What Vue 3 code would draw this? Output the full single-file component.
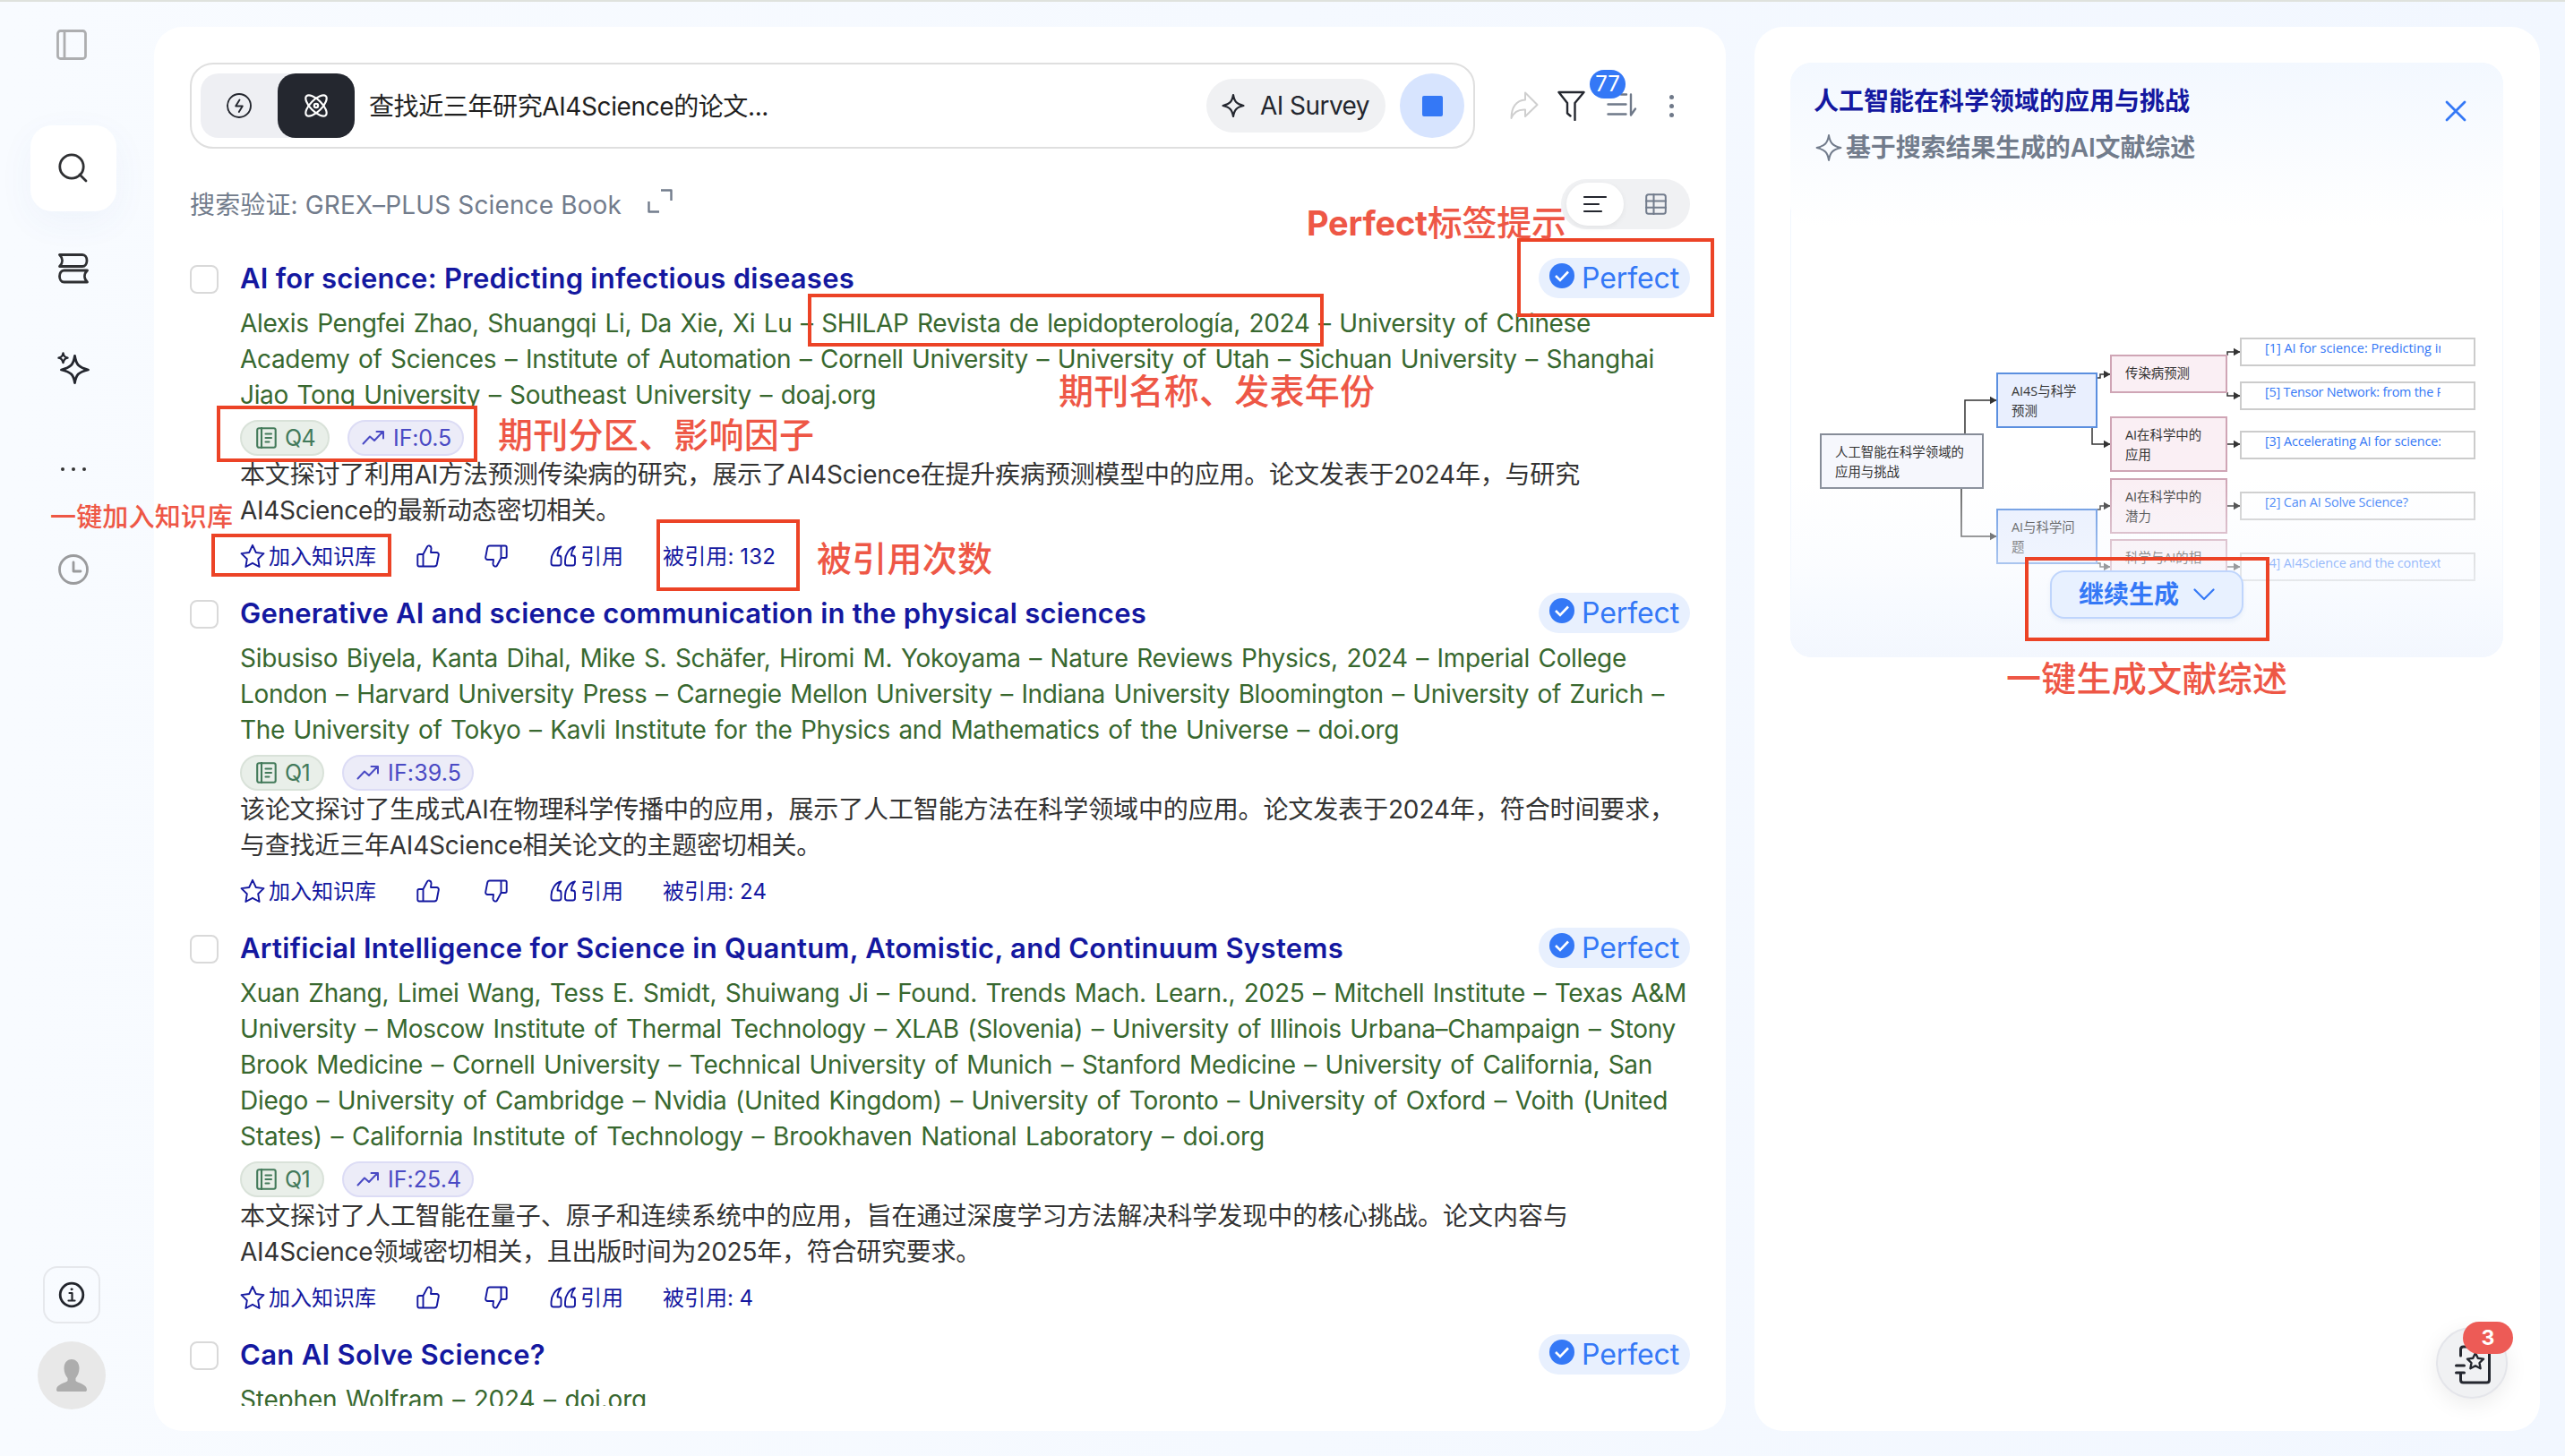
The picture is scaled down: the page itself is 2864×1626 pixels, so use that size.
<template>
  <div class="page">
    <aside class="sidebar">
      <svg class="ic nav-panel" viewBox="0 0 34 34">
        <rect x="1.5" y="1.5" width="31" height="31" rx="3" />
        <path d="M9 2v30" />
      </svg>
      <div class="nav-search">
        <svg class="ic" width="34" height="34" viewBox="0 0 34 34">
          <circle cx="15" cy="15" r="13.2" />
          <path d="M24 24l7 7" />
        </svg>
      </div>
      <svg class="ic nav-books" viewBox="0 0 34 34">
        <path d="M1.5 1.5H27c3 0 5 3 5 6.500s-2 6.500-5 6.500H1.500c4-4 4-9 0-13z" />
        <path d="M32.500 19H6.500c-3 0-5 3-5 6.500s2 6.500 5 6.500h26c-4-4-4-9 0-13z" />
      </svg>
      <svg class="ic nav-spark" viewBox="0 0 36 36">
        <path d="M19.500 4.500c1.500 9.500 4 12.500 15 15.500-11 2.500-13.500 5.500-15 14.500-1.500-9-4-12-15-14.500 11-3 13.500-6 15-15.500z" />
        <path d="M6.500 1.500c.8 3.500 1.700 4.400 5 5.200-3.300.8-4.200 1.800-5 5.300-.8-3.500-1.700-4.500-5-5.300 3.300-.8 4.200-1.700 5-5.200z" stroke-width="2.400" />
      </svg>
      <div class="nav-dots"><i></i><i></i><i></i></div>
      <svg class="ic nav-clock" viewBox="0 0 34 34">
        <circle cx="17" cy="17" r="15.500" />
        <path d="M17 9v10h8" />
      </svg>
      <div class="nav-info">
        <svg class="ic" width="30" height="30" viewBox="0 0 30 30">
          <circle cx="15" cy="15" r="12.800" />
          <path d="M12.500 13h3v8M11.500 21.500h7" stroke-width="2.200" />
          <circle cx="15" cy="8.800" r="1" fill="currentColor" stroke-width="1" />
        </svg>
      </div>
      <div class="avatar">
        <svg width="36" height="38" viewBox="0 0 36 38">
          <path
            fill="#adadad"
            d="M18 1c5 0 8.500 4 8.500 10 0 4.500-1.700 8.500-4 11v3c2 2.500 12.500 3.500 12.500 10 0 1.500-1 2-2 2H3c-1 0-2-.5-2-2 0-6.500 10.500-7.500 12.500-10v-3c-2.300-2.500-4-6.500-4-11C9.500 5 13 1 18 1z"
          />
        </svg>
      </div>
    </aside>

    <main class="panel results">
      <header class="topbar">
        <div class="searchbox">
          <div class="modes">
            <div class="mode">
              <svg class="ic" width="30" height="30" viewBox="0 0 30 30" stroke-width="1.900">
                <circle cx="15" cy="15" r="13" />
                <path d="M15.500 8.500l-4.300 7h7.600l-4 6.500" />
              </svg>
            </div>
            <div class="mode active">
              <svg class="ic" width="28" height="28" viewBox="0 0 28 28" stroke-width="2.200">
                <ellipse cx="14" cy="14" rx="15.200" ry="6.400" transform="rotate(45 14 14)" />
                <ellipse cx="14" cy="14" rx="15.200" ry="6.400" transform="rotate(-45 14 14)" />
                <circle cx="14" cy="14" r="2.200" />
              </svg>
            </div>
          </div>
          <span class="query"><span v-fit="446">查找近三年研究AI4Science的论文...</span></span>
          <div class="survey">
            <svg class="ic" width="28" height="28" viewBox="0 0 28 28" stroke-width="2.200">
              <path d="M14 2c1.300 7.500 3.500 10 11.500 12-8 2-10.200 4.500-11.500 12-1.300-7.500-3.500-10-11.500-12 8-2 10.200-4.500 11.500-12z" />
            </svg>
            <span v-fit="122">AI Survey</span>
          </div>
          <div class="stop"><i></i></div>
        </div>
        <svg class="ic share" viewBox="0 0 32 32">
          <path d="M17 1.500L30.500 15 17 28v-7.500C9 20 4 23.500 1.500 30 1.500 18 7 10 17 9.500z" />
        </svg>
        <svg class="ic filter" viewBox="0 0 32 34">
          <path d="M14.500 28.500l-3.500-3V14L1.500 2h28L19.500 14v19" />
        </svg>
        <div class="sort">
          <svg class="ic" width="34" height="28" viewBox="0 0 34 28">
            <path d="M16 1.500h6M1.500 12.500h20M1.500 23.500h20M27 1.500v23l5-7" />
          </svg>
          <b class="count">77</b>
        </div>
        <div class="more"><i></i><i></i><i></i></div>
      </header>

      <div class="subbar">
        <span v-fit="482">搜索验证: GREX–PLUS Science Book</span>
        <svg class="ic" width="30" height="30" viewBox="0 0 30 30" stroke-width="2.400">
          <path d="M16 2.500h11.500V14M2.500 15v11.500H14" stroke-linecap="butt" />
        </svg>
        <div class="views">
          <div class="view on">
            <svg class="ic" width="28" height="20" viewBox="0 0 28 20" stroke-width="2.200">
              <path d="M2 2h24M2 10h16M2 18h19" />
            </svg>
          </div>
          <div class="view">
            <svg class="ic" width="24" height="24" viewBox="0 0 24 24" stroke-width="2">
              <rect x="1.200" y="1.200" width="21.600" height="21.600" rx="2.500" />
              <path d="M9.500 1v22M1 8.500h22M1 15.700h22" />
            </svg>
          </div>
        </div>
      </div>

      <div class="list">
        <article v-for="p in papers" :key="p.title" class="paper">
          <i class="check"></i>
          <div class="body">
            <div class="head">
              <h3><span v-fit="p.titleWidth">{{ p.title }}</span></h3>
              <div class="perfect">
                <svg width="28" height="28" viewBox="0 0 28 28">
                  <circle cx="14" cy="14" r="14" fill="#3478f6" />
                  <path d="M7 14l5 5 9-9.500" fill="none" stroke="#fff" stroke-width="2.600" />
                </svg>
                <span v-fit="109">Perfect</span>
              </div>
            </div>
            <div class="authors">
              <div v-for="l in p.authors" :key="l[0]"><span v-fit="l[1]">{{ l[0] }}</span></div>
            </div>
            <template v-if="p.q">
              <div class="tags">
                <span class="tag q">
                  <svg class="ic" width="23" height="24" viewBox="0 0 23 24" stroke-width="2.100">
                    <rect x="1.200" y="1.200" width="20.500" height="21.600" rx="2" />
                    <path d="M6 1v22M10.500 7.500h6.500M10.500 12h6.500M10.500 16.500h4" />
                  </svg>
                  {{ p.q }}
                </span>
                <span class="tag f">
                  <svg class="ic" width="26" height="18" viewBox="0 0 26 18" stroke-width="2">
                    <path d="M1.500 15.500l7.500-8 5 4.500 9.500-10M16.500 2H24v7.500" />
                  </svg>
                  <span v-fit="p.ifWidth">IF:{{ p.impact }}</span>
                </span>
              </div>
              <div class="desc">
                <div v-for="l in p.desc" :key="l[0]"><span v-fit="l[1]">{{ l[0] }}</span></div>
              </div>
              <div class="actions">
                <svg class="ic star" viewBox="0 0 28 28">
                  <path d="M14 1.800l3.800 8.200 8.700 1.100-6.300 6.200 1.400 8.700-7.600-4.200L6.400 26l1.400-8.700-6.300-6.200 8.700-1.100z" />
                </svg>
                <span class="join">加入知识库</span>
                <svg class="ic up" viewBox="0 0 26 26"><path :d="thumb" /></svg>
                <svg class="ic down" viewBox="0 0 26 26"><path :d="thumb" transform="rotate(180 13 13)" /></svg>
                <svg class="ic quote" viewBox="0 0 30 24">
                  <path d="M12.500 1.500C6 3 1.500 10 1.500 17v3c0 1.500 1 2.500 2.500 2.500h6c1.500 0 2.500-1 2.500-2.500v-6c0-1.500-1-2.500-2.500-2.500H8.500c0-4 1.500-7 4-10z" />
                  <path d="M28 1.500C21.500 3 17 10 17 17v3c0 1.500 1 2.500 2.500 2.500h6c1.500 0 2.500-1 2.500-2.500v-6c0-1.500-1-2.500-2.500-2.500H24c0-4 1.500-7 4-10z" />
                </svg>
                <span class="cite">引用</span>
                <span v-fit="p.citedWidth">被引用: {{ p.cited }}</span>
              </div>
            </template>
          </div>
        </article>
      </div>
    </main>

    <section class="panel side">
      <div class="card">
        <div class="card-head">
          <div>
            <h2>人工智能在科学领域的应用与挑战</h2>
            <p>
              <svg class="ic" width="30" height="30" viewBox="0 0 28 28" stroke-width="1.900">
                <path d="M14 1c1.300 8 4 11 12.500 13-8.500 2-11.200 5-12.500 13-1.300-8-4-11-12.500-13C10 12 12.700 9 14 1z" />
              </svg>
              <span v-fit="390">基于搜索结果生成的AI文献综述</span>
            </p>
          </div>
          <svg class="ic close" viewBox="0 0 24 24"><path d="M2 2l20 20M22 2L2 22" /></svg>
        </div>
        <svg class="mindmap" width="796" height="417" viewBox="1999 253 796 417">
          <defs>
            <marker id="arrow" markerWidth="8" markerHeight="10" refX="7.500" refY="5" orient="auto" markerUnits="userSpaceOnUse">
              <path d="M0 0.500L8 5 0 9.500z" fill="#333" />
            </marker>
            <clipPath id="leafClip"><rect x="2520" y="360" width="205" height="300" /></clipPath>
          </defs>
          <path v-for="e in edges" :key="e" :d="e" class="edge" marker-end="url(#arrow)" />
          <g v-for="n in nodes" :key="n.x + '-' + n.y">
            <rect :x="n.x + 1" :y="n.y + 1" :width="n.w - 2" :height="n.h - 2" :class="['node', n.kind]" />
            <text v-for="(t, i) in n.lines" :key="t" :x="n.x + 17" :y="n.y + 25.500 + i * 22" class="node-text">{{ t }}</text>
          </g>
          <g v-for="l in leaves" :key="l.text">
            <rect x="2502" :y="l.y + 1" width="261" height="30" class="node leaf" />
            <text x="2529" :y="l.y + 17" :textLength="l.w" class="leaf-text" clip-path="url(#leafClip)">{{ l.text }}</text>
          </g>
        </svg>
        <div class="fade"></div>
        <button class="continue">
          继续生成
          <svg class="ic" width="24" height="14" viewBox="0 0 24 14" stroke-width="2.200"><path d="M1.500 1.500L12 12 22.500 1.500" /></svg>
        </button>
      </div>
      <div class="fab">
        <svg class="ic" width="42" height="46" viewBox="0 0 42 46">
          <path d="M7.500 13V6c0-2 1-3 3-3h26c2 0 3 1 3 3v34c0 2-1 3-3 3h-26c-2 0-3-1-3-3v-8M2.500 24h9M2.500 32h9" />
          <path d="M24 10l2.800 5.800 6.200.8-4.500 4.400 1.100 6.200-5.600-3-5.600 3 1.100-6.200-4.500-4.400 6.200-.8z" stroke-width="2.400" />
        </svg>
        <b>3</b>
      </div>
    </section>

    <!-- red callouts drawn over the page -->
    <svg class="notes" width="2864" height="1626" viewBox="0 0 2864 1626">
      <rect v-for="b in boxes" :key="b[0]" :x="b[0] + 2" :y="b[1] + 2" :width="b[2] - b[0] - 4" :height="b[3] - b[1] - 4" />
      <text v-for="n in notes" :key="n.text" :x="n.x" :y="n.y" :textLength="n.w" :font-size="n.size"><tspan v-if="n.lead" class="lead">{{ n.lead }}</tspan>{{ n.text }}</text>
    </svg>
  </div>
</template>

<script setup>
// stretches a single line to the given width with letter-spacing
const vFit = {
  mounted(el, { value }) {
    const width = el.getBoundingClientRect().width;
    el.style.letterSpacing = (value - width) / el.textContent.length + "px";
  },
};

const thumb =
  "M7.500 11l4.500-8.500c.5-1 1.500-1.300 2.500-1 1.500.5 2.200 1.800 2 3.300L16 9h6.500c1.600 0 2.600 1.300 2.300 2.800l-2 10.500c-.3 1.400-1.300 2.200-2.700 2.200H3c-1 0-1.700-.7-1.700-1.700V12.700c0-1 .7-1.700 1.700-1.700h4.500zm0 0v13.500";

const papers = [
  {
    title: "AI for science: Predicting infectious diseases",
    titleWidth: 686,
    authors: [
      ["Alexis Pengfei Zhao, Shuangqi Li, Da Xie, Xi Lu – SHILAP Revista de lepidopterología, 2024 – University of Chinese", 1508],
      ["Academy of Sciences – Institute of Automation – Cornell University – University of Utah – Sichuan University – Shanghai", 1579],
      ["Jiao Tong University – Southeast University – doaj.org", 710],
    ],
    q: "Q4",
    impact: "0.5",
    ifWidth: 65,
    desc: [
      ["本文探讨了利用AI方法预测传染病的研究，展示了AI4Science在提升疾病预测模型中的应用。论文发表于2024年，与研究", 1496],
      ["AI4Science的最新动态密切相关。", 425],
    ],
    cited: 132,
    citedWidth: 126,
  },
  {
    title: "Generative AI and science communication in the physical sciences",
    titleWidth: 1012,
    authors: [
      ["Sibusiso Biyela, Kanta Dihal, Mike S. Schäfer, Hiromi M. Yokoyama – Nature Reviews Physics, 2024 – Imperial College", 1548],
      ["London – Harvard University Press – Carnegie Mellon University – Indiana University Bloomington – University of Zurich –", 1590],
      ["The University of Tokyo – Kavli Institute for the Physics and Mathematics of the Universe – doi.org", 1294],
    ],
    q: "Q1",
    impact: "39.5",
    ifWidth: 82,
    desc: [
      ["该论文探讨了生成式AI在物理科学传播中的应用，展示了人工智能方法在科学领域中的应用。论文发表于2024年，符合时间要求，", 1602],
      ["与查找近三年AI4Science相关论文的主题密切相关。", 649],
    ],
    cited: 24,
    citedWidth: 116,
  },
  {
    title: "Artificial Intelligence for Science in Quantum, Atomistic, and Continuum Systems",
    titleWidth: 1232,
    authors: [
      ["Xuan Zhang, Limei Wang, Tess E. Smidt, Shuiwang Ji – Found. Trends Mach. Learn., 2025 – Mitchell Institute – Texas A&M", 1615],
      ["University – Moscow Institute of Thermal Technology – XLAB (Slovenia) – University of Illinois Urbana–Champaign – Stony", 1603],
      ["Brook Medicine – Cornell University – Technical University of Munich – Stanford Medicine – University of California, San", 1577],
      ["Diego – University of Cambridge – Nvidia (United Kingdom) – University of Toronto – University of Oxford – Voith (United", 1594],
      ["States) – California Institute of Technology – Brookhaven National Laboratory – doi.org", 1144],
    ],
    q: "Q1",
    impact: "25.4",
    ifWidth: 82,
    desc: [
      ["本文探讨了人工智能在量子、原子和连续系统中的应用，旨在通过深度学习方法解决科学发现中的核心挑战。论文内容与", 1483],
      ["AI4Science领域密切相关，且出版时间为2025年，符合研究要求。", 827],
    ],
    cited: 4,
    citedWidth: 101,
  },
  {
    title: "Can AI Solve Science?",
    titleWidth: 341,
    authors: [["Stephen Wolfram – 2024 – doi.org", 454]],
  },
];

const nodes = [
  { x: 2032, y: 484, w: 183, h: 62, kind: "root", lines: ["人工智能在科学领域的", "应用与挑战"] },
  { x: 2229, y: 416, w: 113, h: 62, kind: "blue", lines: ["AI4S与科学", "预测"] },
  { x: 2229, y: 568, w: 113, h: 62, kind: "blue", lines: ["AI与科学问", "题"] },
  { x: 2356, y: 396, w: 131, h: 43, kind: "pink", lines: ["传染病预测"] },
  { x: 2356, y: 465, w: 131, h: 62, kind: "pink", lines: ["AI在科学中的", "应用"] },
  { x: 2356, y: 534, w: 131, h: 62, kind: "pink", lines: ["AI在科学中的", "潜力"] },
  { x: 2356, y: 602, w: 131, h: 62, kind: "pink", lines: ["科学与AI的相"] },
];

const leaves = [
  { y: 377, w: 207, text: "[1] AI for science: Predicting inf" },
  { y: 426, w: 208, text: "[5] Tensor Network: from the Pe" },
  { y: 481, w: 197, text: "[3] Accelerating AI for science:" },
  { y: 549, w: 160, text: "[2] Can AI Solve Science?" },
  { y: 617, w: 197, text: "[4] AI4Science and the context" },
];

const edges = [
  "M2194 484V447H2229",
  "M2190 546V599H2229",
  "M2342 422H2345V418H2356",
  "M2336 478V496H2356",
  "M2342 569H2345V565H2356",
  "M2342 629H2345V633H2356",
  "M2487 397V393H2501",
  "M2487 438V442H2501",
  "M2487 496H2501",
  "M2487 565H2501",
  "M2487 633H2501",
];

// x1, y1, x2, y2
const boxes = [
  [1694, 266, 1914, 354],
  [902, 328, 1478, 387],
  [242, 453, 533, 516],
  [236, 596, 437, 644],
  [733, 580, 893, 660],
  [2261, 622, 2534, 716],
];

const notes = [
  { x: 1459, y: 263, w: 290, size: 39, lead: "Perfect", text: "标签提示" },
  { x: 1182, y: 451, w: 353, size: 39, text: "期刊名称、发表年份" },
  { x: 556, y: 500, w: 353, size: 39, text: "期刊分区、影响因子" },
  { x: 912, y: 638, w: 196, size: 39, text: "被引用次数" },
  { x: 56, y: 588, w: 204, size: 29, text: "一键加入知识库" },
  { x: 2240, y: 772, w: 314, size: 39, text: "一键生成文献综述" },
];
</script>

<style>
body {
  margin: 0;
}
</style>

<style scoped>
.page {
  position: relative;
  box-sizing: border-box;
  width: 2864px;
  height: 1626px;
  display: flex;
  padding: 28px 28px 28px 0;
  border-top: 2px solid #dfe2dd;
  background: linear-gradient(90deg, #f8fbff, #f2f7ff);
  font-family: Inter, "Noto Sans CJK SC", sans-serif;
  font-size: 28px;
  line-height: 40px;
  color: #333;
  overflow: hidden;
}
.page span {
  white-space: nowrap;
}
.ic {
  display: block;
  flex: none;
  fill: none;
  stroke: currentColor;
  stroke-linecap: round;
  stroke-linejoin: round;
}

/* sidebar */
.sidebar {
  width: 172px;
  flex: none;
  box-sizing: border-box;
  padding: 3px 8px 24px 0;
  display: flex;
  flex-direction: column;
  align-items: center;
  color: #2f3033;
  stroke-width: 2.8;
}
.nav-panel {
  width: 34px;
  height: 34px;
  margin-right: 4px;
  color: #adaeb0;
}
.nav-search {
  width: 96px;
  height: 96px;
  margin-top: 73px;
  border-radius: 24px;
  background: #fff;
  box-shadow: 0 12px 40px rgba(60, 100, 170, 0.05);
  display: flex;
  align-items: center;
  justify-content: center;
}
.nav-books {
  width: 34px;
  height: 34px;
  margin-top: 47px;
}
.nav-spark {
  width: 36px;
  height: 36px;
  margin-top: 76px;
  color: #24272f;
}
.nav-dots {
  display: flex;
  gap: 8px;
  margin-top: 93px;
}
.nav-dots i {
  width: 4px;
  height: 4px;
  border-radius: 50%;
  background: #333;
}
.nav-clock {
  width: 34px;
  height: 34px;
  margin-top: 93px;
  color: #9a9b9d;
}
.nav-info {
  box-sizing: border-box;
  width: 64px;
  height: 64px;
  margin-top: auto;
  margin-right: 4px;
  border: 2px solid #e6e8ec;
  border-radius: 16px;
  color: #22252c;
  display: flex;
  align-items: center;
  justify-content: center;
}
.avatar {
  width: 76px;
  height: 76px;
  margin: 20px 4px 0 0;
  border-radius: 50%;
  background: #e8e8e8;
  display: flex;
  align-items: center;
  justify-content: center;
}

/* panels */
.panel {
  box-sizing: border-box;
  height: 1568px;
  border-radius: 32px;
  background: #fff;
}
.results {
  width: 1755px;
  flex: none;
  padding: 40px 40px 28px;
  display: flex;
  flex-direction: column;
}
.side {
  position: relative;
  width: 877px;
  margin-left: 32px;
  padding: 40px 41px 0 40px;
}

/* search bar */
.topbar {
  display: flex;
  align-items: center;
  height: 96px;
}
.searchbox {
  box-sizing: border-box;
  width: 1435px;
  height: 96px;
  padding: 0 10px 0 10px;
  border: 2px solid #dfdfdf;
  border-radius: 26px;
  display: flex;
  align-items: center;
}
.modes {
  display: flex;
  border-radius: 20px;
  background: #eeeff3;
  color: #23262e;
}
.mode {
  width: 86px;
  height: 72px;
  border-radius: 20px;
  display: flex;
  align-items: center;
  justify-content: center;
}
.mode.active {
  background: #24272f;
  color: #fff;
}
.query {
  flex: 1;
  margin-left: 16px;
  padding-top: 1px;
  color: #1f1f1f;
}
.survey {
  box-sizing: border-box;
  width: 200px;
  height: 60px;
  padding-left: 16px;
  border-radius: 30px;
  background: #f0f1f3;
  color: #23262e;
  display: flex;
  align-items: center;
  gap: 16px;
}
.stop {
  width: 72px;
  height: 72px;
  margin-left: 16px;
  border-radius: 50%;
  background: #d7e4fe;
  display: flex;
  align-items: center;
  justify-content: center;
}
.stop i {
  width: 23px;
  height: 23px;
  border-radius: 2px;
  background: #3478f6;
}
.share {
  width: 32px;
  height: 32px;
  margin-left: 39px;
  stroke-width: 2;
  color: #cfcfcf;
}
.filter {
  width: 32px;
  height: 34px;
  margin-left: 21px;
  stroke-width: 2.4;
  color: #24272f;
}
.sort {
  position: relative;
  margin-left: 23px;
  stroke-width: 2.4;
  color: #6f7989;
}
.count {
  position: absolute;
  left: -19px;
  top: -26px;
  width: 40px;
  height: 32px;
  border-radius: 16px;
  background: #3478f6;
  color: #fff;
  font-size: 24px;
  font-weight: 400;
  line-height: 32px;
  text-align: center;
}
.more {
  display: flex;
  flex-direction: column;
  gap: 5px;
  margin-left: 36px;
}
.more i {
  width: 5px;
  height: 5px;
  border-radius: 50%;
  background: #6f7989;
}

.subbar {
  display: flex;
  align-items: center;
  height: 56px;
  margin-top: 34px;
  color: #727c8c;
}
.subbar > span {
  padding-top: 1px;
}
.subbar > .ic {
  margin: -6px 0 0 28px;
}
.views {
  box-sizing: border-box;
  width: 144px;
  height: 56px;
  margin-left: auto;
  padding: 4px 6px;
  border-radius: 28px;
  background: #f0f1f3;
  display: flex;
  gap: 4px;
}
.view {
  width: 64px;
  height: 48px;
  border-radius: 24px;
  display: flex;
  align-items: center;
  justify-content: center;
}
.view.on {
  background: #fff;
  color: #23262e;
  box-shadow: 0 2px 6px rgba(0, 0, 0, 0.06);
}

/* result list */
.list {
  flex: 1;
  min-height: 0;
  padding-top: 35px;
  overflow: hidden;
}
.paper {
  display: flex;
}
.check {
  box-sizing: border-box;
  flex: none;
  width: 32px;
  height: 32px;
  margin: 5px 24px 0 0;
  border: 2px solid #d9d9d9;
  border-radius: 8px;
}
.body {
  flex: 1;
  min-width: 0;
}
.head {
  display: flex;
  justify-content: space-between;
  height: 50px;
}
h3 {
  margin: 0;
  font-size: 31px;
  font-weight: 600;
  line-height: 40px;
  color: #1418a0;
}
.perfect {
  box-sizing: border-box;
  width: 169px;
  height: 45px;
  margin-top: -3px;
  padding: 0 0 0 12px;
  border-radius: 23px;
  background: #e8f0fe;
  color: #3478f6;
  font-size: 32px;
  display: flex;
  align-items: center;
  gap: 8px;
}
.perfect svg {
  margin-top: -5px;
}
.authors {
  color: #38682f;
  word-spacing: 2px;
}
.authors > div {
  height: 40px;
}
.desc > div {
  position: relative;
  top: 1px;
  height: 40px;
}
.tags {
  display: flex;
  gap: 20px;
  height: 40px;
  padding-top: 8px;
}
.tag {
  box-sizing: border-box;
  height: 40px;
  border: 2px solid;
  border-radius: 20px;
  font-size: 25px;
  line-height: 36px;
  display: flex;
  align-items: center;
}
.tag.q {
  gap: 9px;
  padding: 0 14px 0 16px;
  border-color: #d9e2d9;
  background: #e9efe9;
  color: #437a5a;
  letter-spacing: -0.6px;
}
.tag.f {
  gap: 9px;
  padding: 0 12px 0 14px;
  border-color: #dcdcf5;
  background: #ececf8;
  color: #4a4ac4;
}
.actions {
  display: flex;
  align-items: center;
  height: 40px;
  padding: 12px 0 24px;
  color: #1418a0;
  font-size: 24px;
  stroke-width: 1.9;
}
.actions span {
  padding-top: 1px;
}
.star {
  width: 28px;
  height: 28px;
}
.join {
  width: 120px;
  margin-left: 4px;
}
.up,
.down {
  width: 26px;
  height: 26px;
  margin-left: 45px;
}
.down {
  margin-left: 50px;
}
.quote {
  width: 30px;
  height: 24px;
  margin-left: 47px;
}
.cite {
  width: 48px;
  margin: 0 44px 0 4px;
}

/* survey card */
.card {
  position: relative;
  height: 664px;
  border-radius: 24px;
  background: #fff;
  box-shadow: inset 0 0 0 1px #f1f6fe;
  overflow: hidden;
}
.card-head {
  box-sizing: border-box;
  height: 183px;
  padding: 23px 41px 0 26px;
  border-radius: 24px;
  background: linear-gradient(180deg, #f3f8ff, #fff);
  display: flex;
  justify-content: space-between;
}
h2 {
  margin: 0;
  font-size: 28px;
  font-weight: 700;
  line-height: 40px;
  color: #1418a0;
}
.card-head p {
  margin: 12px 0 0 2px;
  display: flex;
  align-items: center;
  gap: 4px;
  font-weight: 600;
  color: #727c8c;
}
.close {
  width: 24px;
  height: 24px;
  margin-top: 19px;
  color: #3478f6;
  stroke-width: 2.8;
}
.mindmap {
  display: block;
}
.edge {
  fill: none;
  stroke: #333;
  stroke-width: 1.5;
}
.node {
  stroke-width: 2;
}
.node.root {
  fill: #f6f7fd;
  stroke: #868c98;
}
.node.blue {
  fill: #e9effe;
  stroke: #5b8fdf;
}
.node.pink {
  fill: #faeff4;
  stroke: #cfa5b5;
}
.node.leaf {
  fill: #fff;
  stroke: #ccc;
}
.node-text {
  font-family: "Open Sans", "Noto Sans CJK SC", sans-serif;
  font-size: 14.4px;
  fill: #333;
}
.leaf-text {
  font-family: "Open Sans", sans-serif;
  font-size: 14.4px;
  font-weight: 500;
  fill: #3478f6;
}
.fade {
  position: absolute;
  left: 0;
  right: 0;
  bottom: 0;
  height: 200px;
  background: linear-gradient(
    180deg,
    rgba(247, 250, 255, 0),
    rgba(247, 250, 255, 0.2) 18%,
    rgba(247, 250, 255, 0.5) 48%,
    rgba(245, 249, 255, 0.8) 72%,
    #f3f7fe
  );
}
.continue {
  position: absolute;
  box-sizing: border-box;
  left: 290px;
  bottom: 43px;
  width: 216px;
  height: 54px;
  padding: 0;
  border: 2px solid #bfd5fc;
  border-radius: 16px;
  background: #e8f1ff;
  box-shadow: 0 3px 5px rgba(60, 100, 180, 0.08);
  color: #3478f6;
  font: 600 28px/40px Inter, "Noto Sans CJK SC", sans-serif;
  display: flex;
  align-items: center;
  justify-content: center;
  gap: 16px;
}
.fab {
  position: absolute;
  box-sizing: border-box;
  left: 761px;
  top: 1452px;
  width: 80px;
  height: 80px;
  border: 2px solid #e4e5ea;
  border-radius: 50%;
  background: #f0f1f3;
  box-shadow: 0 6px 24px rgba(0, 0, 0, 0.08);
  color: #24272f;
  stroke-width: 3;
}
.fab svg {
  margin: 17px 0 0 18px;
}
.fab b {
  position: absolute;
  left: 28px;
  top: -8px;
  width: 56px;
  height: 36px;
  border-radius: 18px;
  background: #ed5b56;
  color: #fff;
  font-size: 23px;
  line-height: 36px;
  text-align: center;
}

.notes {
  position: absolute;
  left: 0;
  top: -2px;
}
.notes rect {
  fill: none;
  stroke: #ec4326;
  stroke-width: 4;
}
.notes text {
  fill: #ee5746;
  font-family: "Noto Sans CJK SC", sans-serif;
  font-weight: 500;
}
.notes .lead {
  font-family: Inter, sans-serif;
  font-size: 38px;
  font-weight: 700;
}
</style>
